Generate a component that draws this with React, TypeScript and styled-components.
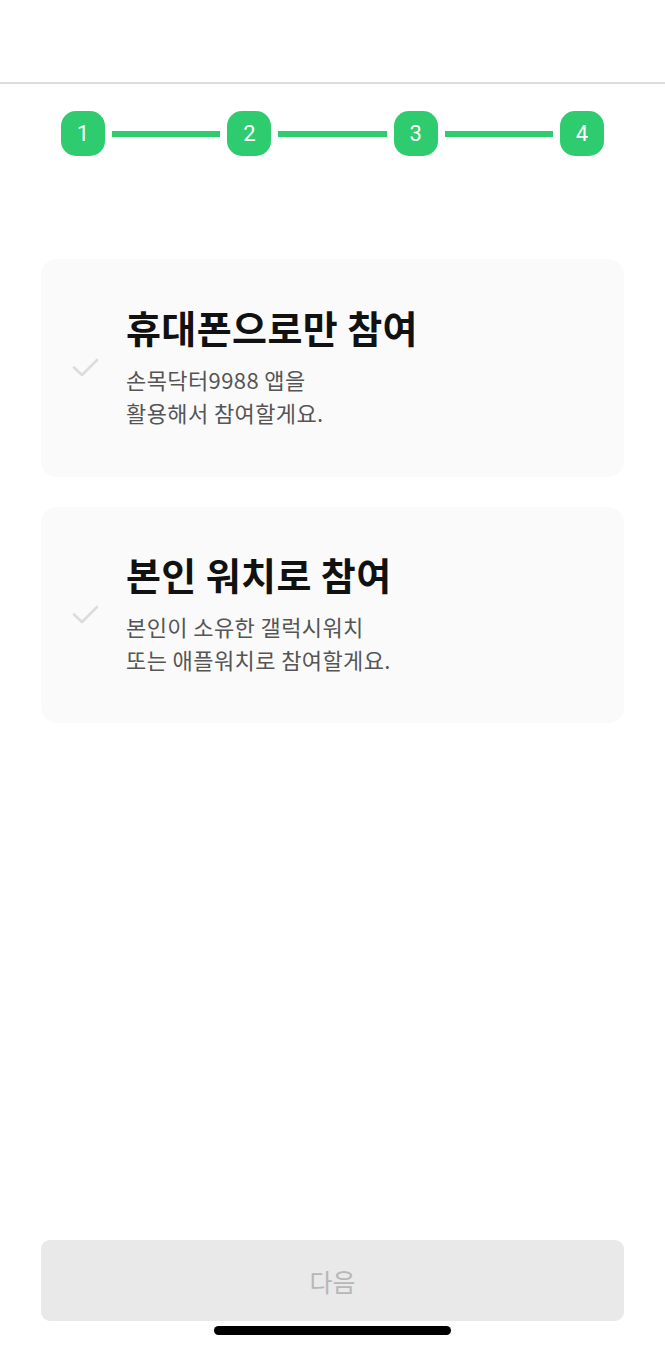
import React from "react";
import styled, { createGlobalStyle } from "styled-components";

const GlobalStyle = createGlobalStyle`
  html, body { margin: 0; padding: 0; background: #ffffff; }
  body { font-family: "Noto Sans CJK KR", "Noto Sans", sans-serif; }
  * { box-sizing: border-box; }
`;

const Page = styled.div`
  width: 665px;
  min-height: 1349px;
  display: flex;
  flex-direction: column;
  background: #ffffff;
`;

const Header = styled.header`
  height: 84px;
  border-bottom: 2px solid #dcdcdc;
  flex-shrink: 0;
`;

const Stepper = styled.div`
  display: flex;
  align-items: center;
  padding: 0 61px;
  margin-top: 27px;
`;

const StepBadge = styled.div`
  width: 44px;
  height: 45px;
  border-radius: 15px;
  background: #2ecc6e;
  color: #ffffff;
  display: flex;
  align-items: center;
  justify-content: center;
  font-family: "Roboto", "Noto Sans", sans-serif;
  font-size: 22px;
  font-weight: 400;
  flex-shrink: 0;
`;

const StepLine = styled.div`
  flex: 1;
  height: 6px;
  margin: 0 7px;
  background: #2ecc6e;
`;

const Options = styled.div`
  display: flex;
  flex-direction: column;
  gap: 30px;
  padding: 0 41px 0 41px;
  margin-top: 103px;
`;

const OptionCard = styled.button<{ $height: number }>`
  display: flex;
  align-items: center;
  gap: 27px;
  width: 100%;
  height: ${(p) => p.$height}px;
  padding: 0 0 5px 31px;
  border: none;
  border-radius: 16px;
  background: #fafafa;
  text-align: left;
  font-family: inherit;
  cursor: pointer;
`;

const CheckMark = styled.svg`
  width: 27px;
  height: 20px;
  flex-shrink: 0;
  margin-top: 5px;
`;

const OptionText = styled.div`
  display: flex;
  flex-direction: column;
`;

const OptionTitle = styled.div`
  font-size: 38px;
  font-weight: 700;
  color: #111111;
  line-height: 50px;
  letter-spacing: 0.4px;
  margin-bottom: 11px;
`;

const OptionDesc = styled.div`
  font-size: 22px;
  font-weight: 400;
  color: #555555;
  line-height: 33px;
  letter-spacing: 0.4px;
`;

const Spacer = styled.div`
  flex: 1;
`;

const NextButton = styled.button`
  margin: 0 41px;
  height: 81px;
  border: none;
  border-radius: 9px;
  background: #e9e9e9;
  color: #b7b7b7;
  font-family: inherit;
  font-size: 25px;
  font-weight: 400;
  display: flex;
  align-items: center;
  justify-content: center;
`;

const HomeIndicator = styled.div`
  align-self: center;
  width: 237px;
  height: 9px;
  border-radius: 5px;
  background: #000000;
  margin: 5px 0 14px;
`;

const Check = () => (
  <CheckMark viewBox="0 0 27 20" fill="none">
    <path
      d="M2 9.5 L10 17 L25 2"
      stroke="#dcdcdc"
      strokeWidth="2.6"
      strokeLinecap="round"
      strokeLinejoin="round"
    />
  </CheckMark>
);

const options = [
  {
    title: "휴대폰으로만 참여",
    desc: ["손목닥터9988 앱을", "활용해서 참여할게요."],
    height: 218,
  },
  {
    title: "본인 워치로 참여",
    desc: ["본인이 소유한 갤럭시워치", "또는 애플워치로 참여할게요."],
    height: 216,
  },
];

export default function App() {
  const steps = [1, 2, 3, 4];
  return (
    <>
      <GlobalStyle />
      <Page>
        <Header />
        <Stepper>
          {steps.map((n, i) => (
            <React.Fragment key={n}>
              <StepBadge>{n}</StepBadge>
              {i < steps.length - 1 && <StepLine />}
            </React.Fragment>
          ))}
        </Stepper>
        <Options>
          {options.map((o) => (
            <OptionCard key={o.title} $height={o.height}>
              <Check />
              <OptionText>
                <OptionTitle>{o.title}</OptionTitle>
                {o.desc.map((d) => (
                  <OptionDesc key={d}>{d}</OptionDesc>
                ))}
              </OptionText>
            </OptionCard>
          ))}
        </Options>
        <Spacer />
        <NextButton>다음</NextButton>
        <HomeIndicator />
      </Page>
    </>
  );
}
